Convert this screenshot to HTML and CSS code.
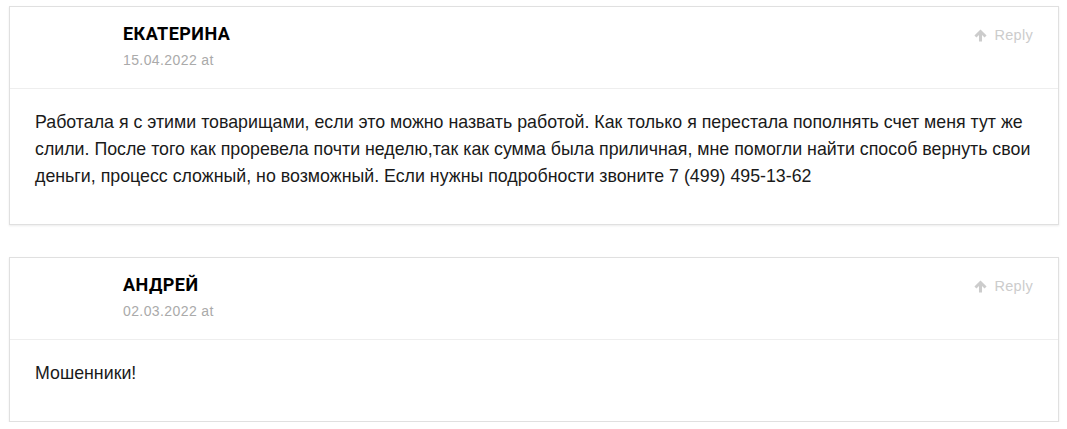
FILE: index.html
```html
<!DOCTYPE html>
<html lang="ru">
<head>
  <meta charset="UTF-8">
  <meta name="viewport" content="width=device-width, initial-scale=1.0">
  <title>Отзывы</title>
  <link rel="stylesheet" href="styles.css">
</head>
<body>

  <div class="comments">

    <!-- comment 1 -->
    <div class="comment">
      <div class="comment-head">
        <div class="comment-meta">
          <div class="comment-author">Екатерина</div>
          <div class="comment-date">15.04.2022 at</div>
        </div>
        <a class="reply-link" href="#">
          <svg class="reply-icon" viewBox="0 0 12 12" width="13" height="13"><path d="M6 0.4 L11.6 6 L9.7 7.9 L7.4 5.6 L7.4 11.6 L4.6 11.6 L4.6 5.6 L2.3 7.9 L0.4 6 Z" fill="currentColor"/></svg>
          Reply
        </a>
      </div>
      <div class="comment-body">
        <p>Работала я с этими товарищами, если это можно назвать работой. Как только я перестала пополнять счет меня тут же слили. После того как проревела почти неделю,так как сумма была приличная, мне помогли найти способ вернуть свои деньги, процесс сложный, но возможный. Если нужны подробности звоните 7 (499) 495-13-62</p>
      </div>
    </div>

    <!-- comment 2 -->
    <div class="comment">
      <div class="comment-head">
        <div class="comment-meta">
          <div class="comment-author">Андрей</div>
          <div class="comment-date">02.03.2022 at</div>
        </div>
        <a class="reply-link" href="#">
          <svg class="reply-icon" viewBox="0 0 12 12" width="13" height="13"><path d="M6 0.4 L11.6 6 L9.7 7.9 L7.4 5.6 L7.4 11.6 L4.6 11.6 L4.6 5.6 L2.3 7.9 L0.4 6 Z" fill="currentColor"/></svg>
          Reply
        </a>
      </div>
      <div class="comment-body">
        <p>Мошенники!</p>
      </div>
    </div>

  </div>

</body>
</html>
```

FILE: styles.css
```css
body {
  margin: 0;
  padding: 6px 8px 0 9px;
  background-color: #fff;
  font-family: "Liberation Sans", Arial, sans-serif;
  color: #1a1a1a;
}
.comments {
  display: flex;
  flex-direction: column;
  gap: 32px;
}
.comment {
  border: 1px solid #e0e0e0;
  background-color: #fff;
  box-shadow: 0 1px 2px rgba(0, 0, 0, 0.08);
}
.comment-head {
  display: flex;
  justify-content: space-between;
  align-items: flex-start;
  height: 82px;
  box-sizing: border-box;
  padding: 16px 25px 0 113px; /* room for the avatar */
  border-bottom: 1px solid #eeeeee;
}
.comment-author {
  font-family: Roboto, "Liberation Sans", sans-serif;
  font-weight: 700;
  font-size: 18px;
  line-height: 22px;
  letter-spacing: 0.45px;
  text-transform: uppercase;
  color: #000;
}
.comment-date {
  margin-top: 5px;
  font-size: 14px;
  line-height: 20px;
  letter-spacing: 0.4px;
  color: #aaaaaa;
}
.reply-link {
  display: flex;
  align-items: center;
  gap: 7px;
  margin-top: 2px;
  font-size: 14.5px;
  line-height: 20px;
  letter-spacing: 0.3px;
  color: #cccccc;
  text-decoration: none;
}
.reply-icon {
  display: block;
}
.comment-body {
  padding: 20px 25px 34px;
}
.comment-body p {
  margin: 0;
  font-size: 17.8px;
  line-height: 27px;
}
```
